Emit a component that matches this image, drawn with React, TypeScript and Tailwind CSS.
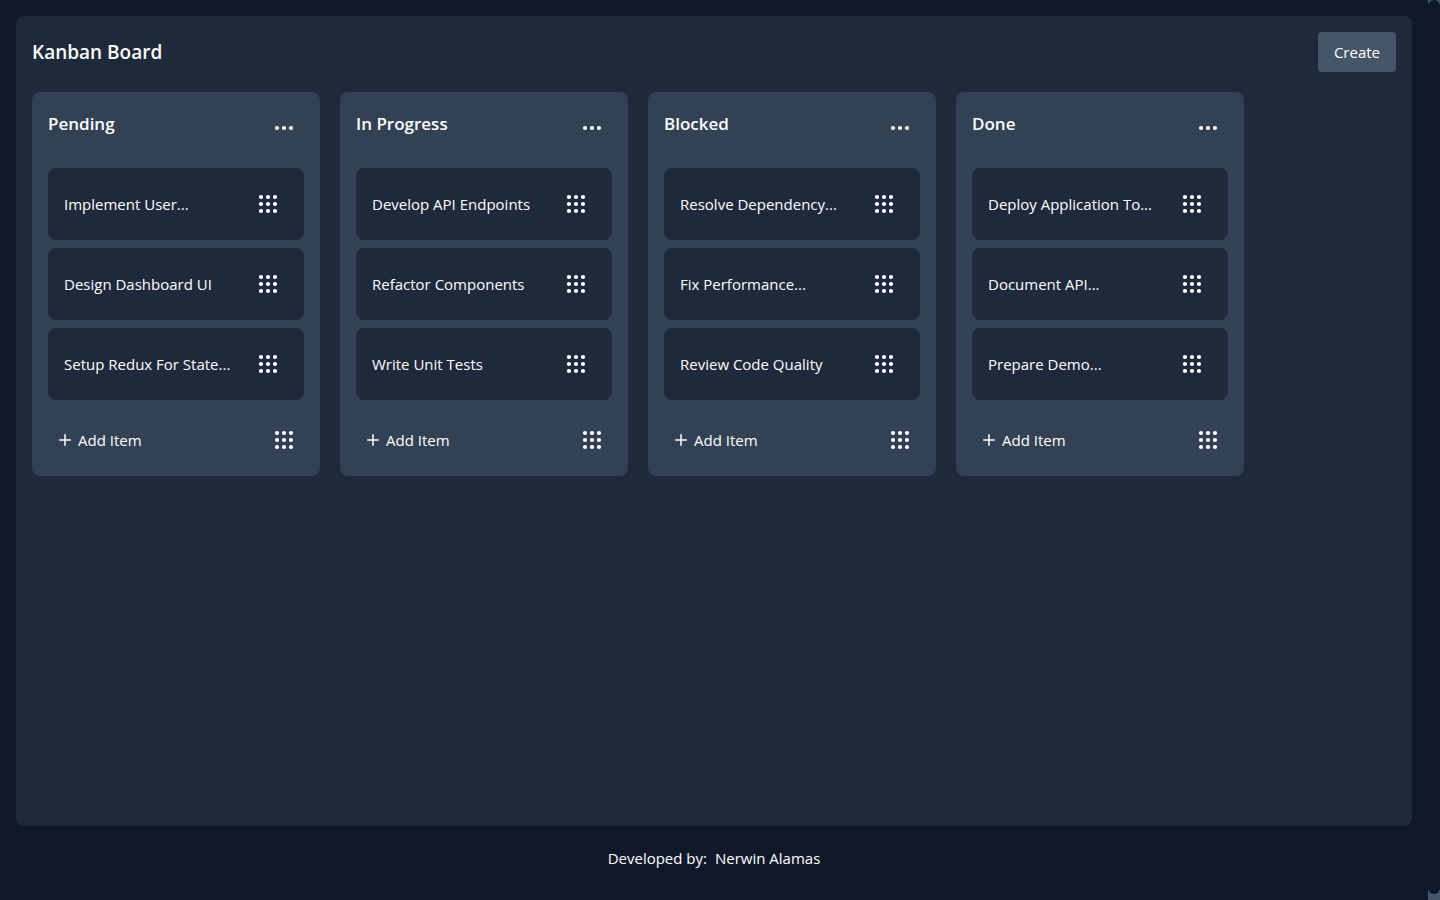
import { Ellipsis, Grip, Plus } from "lucide-react";

type Column = { title: string; items: string[] };

const columns: Column[] = [
  { title: "Pending", items: ["Implement User...", "Design Dashboard UI", "Setup Redux For State..."] },
  { title: "In Progress", items: ["Develop API Endpoints", "Refactor Components", "Write Unit Tests"] },
  { title: "Blocked", items: ["Resolve Dependency...", "Fix Performance...", "Review Code Quality"] },
  { title: "Done", items: ["Deploy Application To...", "Document API...", "Prepare Demo..."] },
];

function DragHandle({ label }: { label: string }) {
  return (
    <button type="button" aria-label={label} className="shrink-0 cursor-grab p-2">
      <Grip size={24} strokeWidth={2.2} />
    </button>
  );
}

function Card({ text }: { text: string }) {
  return (
    <li className="flex items-center justify-between rounded-lg bg-[#1e293b] p-4">
      <span className="whitespace-nowrap">{text}</span>
      <DragHandle label={`Move ${text}`} />
    </li>
  );
}

function BoardColumn({ title, items }: Column) {
  return (
    <section className="w-72 shrink-0 rounded-lg bg-[#334155] p-4">
      <header className="mb-5 flex items-start justify-between">
        <h2 className="text-[17px] leading-8 font-semibold">{title}</h2>
        <button type="button" aria-label={`${title} options`} className="p-2">
          <Ellipsis size={24} strokeWidth={2.2} />
        </button>
      </header>
      <ul className="flex flex-col gap-2">
        {items.map((item) => (
          <Card key={item} text={item} />
        ))}
      </ul>
      <footer className="mt-5 flex items-center justify-between">
        <button type="button" className="flex items-center gap-1 px-2 py-2">
          <Plus size={18} strokeWidth={2} />
          Add Item
        </button>
        <DragHandle label={`Move ${title}`} />
      </footer>
    </section>
  );
}

export default function App() {
  return (
    <div className="flex min-h-screen bg-[#0f172a] font-['Open_Sans','Noto_Sans',sans-serif] text-[15px] leading-6 text-white">
      <div className="min-w-0 flex-1 px-4 pt-4">
        <main className="min-h-[90vh] rounded-lg bg-[#1e293b] p-4">
          <header className="mb-5 flex items-center justify-between">
            <h1 className="text-[19px] leading-7 font-semibold">Kanban Board</h1>
            <button type="button" className="rounded bg-[#475569] px-4 py-2">
              Create
            </button>
          </header>
          <div className="flex items-start gap-5 overflow-x-auto">
            {columns.map((column) => (
              <BoardColumn key={column.title} {...column} />
            ))}
          </div>
        </main>
        <footer className="flex items-center justify-center gap-2 py-5">
          <span>Developed by:</span>
          <a href="#author">Nerwin Alamas</a>
        </footer>
      </div>
      <div aria-hidden="true" className="flex w-3 shrink-0 flex-col bg-[#475569] pb-1.5">
        <div className="flex-1 rounded-md bg-[#0f172a]" />
      </div>
    </div>
  );
}
